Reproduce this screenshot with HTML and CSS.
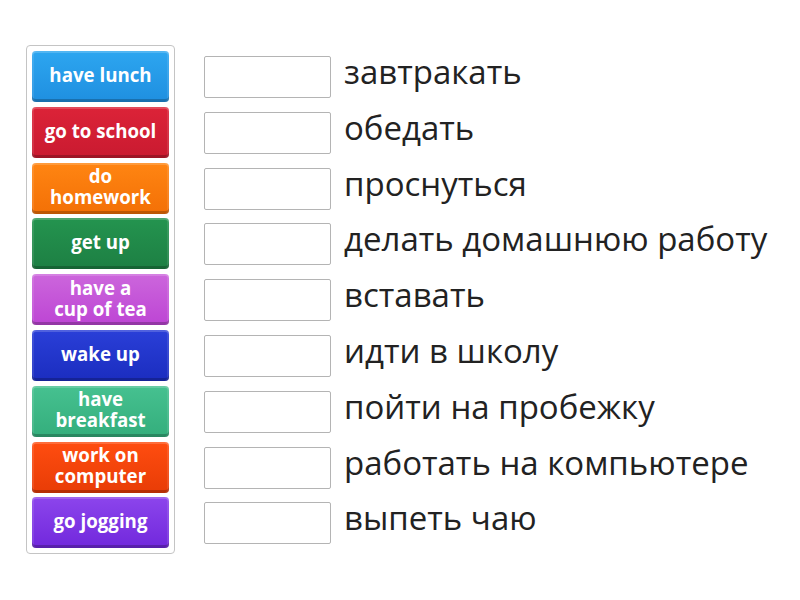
FILE: index.html
```html
<!DOCTYPE html>
<html>
<head>
<meta charset="utf-8">
<link rel="stylesheet" href="styles.css">
</head>
<body>
<div class="game">
  <div class="bank">
    <div class="tile c1">have lunch</div>
    <div class="tile c2">go to school</div>
    <div class="tile c3">do<br>homework</div>
    <div class="tile c4">get up</div>
    <div class="tile c5">have a<br>cup of tea</div>
    <div class="tile c6">wake up</div>
    <div class="tile c7">have<br>breakfast</div>
    <div class="tile c8">work on<br>computer</div>
    <div class="tile c9">go jogging</div>
  </div>
  <div class="rows">
    <div class="row"><div class="slot"></div><span class="word">завтракать</span></div>
    <div class="row"><div class="slot"></div><span class="word">обедать</span></div>
    <div class="row"><div class="slot"></div><span class="word">проснуться</span></div>
    <div class="row"><div class="slot"></div><span class="word">делать домашнюю работу</span></div>
    <div class="row"><div class="slot"></div><span class="word">вставать</span></div>
    <div class="row"><div class="slot"></div><span class="word">идти в школу</span></div>
    <div class="row"><div class="slot"></div><span class="word">пойти на пробежку</span></div>
    <div class="row"><div class="slot"></div><span class="word">работать на компьютере</span></div>
    <div class="row"><div class="slot"></div><span class="word">выпеть чаю</span></div>
  </div>
</div>
</body>
</html>
```
FILE: styles.css
```css
html, body {
  margin: 0;
  padding: 0;
  background: #fff;
}
body {
  font-family: "Open Sans", "Liberation Sans", sans-serif;
}
.game {
  display: flex;
  align-items: flex-start;
  padding: 45px 0 0 26px;
}
.bank {
  width: 137px;
  padding: 5px;
  border: 1px solid #c4c4c4;
  border-radius: 4px;
  display: flex;
  flex-direction: column;
  gap: 4.8px;
}
.tile {
  height: 51px;
  box-sizing: border-box;
  border-radius: 4px;
  color: #fff;
  font-weight: 700;
  font-size: 18.7px;
  line-height: 21px;
  text-align: center;
  display: flex;
  align-items: center;
  justify-content: center;
  padding-bottom: 4px;
  box-shadow: inset 0 -3px 0 rgba(0,0,0,0.22), inset 0 2px 0 rgba(255,255,255,0.18), inset 2px 0 0 rgba(255,255,255,0.1), inset -2px 0 0 rgba(255,255,255,0.1);
}
.c1 { background: linear-gradient(#2da6f0, #1f8fe0); }
.c2 { background: linear-gradient(#dc2338, #c91a30); }
.c3 { background: linear-gradient(#ff8512, #f37006); }
.c4 { background: linear-gradient(#24944f, #1d7f43); }
.c5 { background: linear-gradient(#cc66dc, #bd45d4); }
.c6 { background: linear-gradient(#2a3fd8, #1b2dbf); }
.c7 { background: linear-gradient(#46c190, #34ae7c); }
.c8 { background: linear-gradient(#ff4d10, #e83c06); }
.c9 { background: linear-gradient(#8c45ec, #7128dc); }
.rows {
  margin-left: 29px;
  padding-top: 11px;
  display: flex;
  flex-direction: column;
  gap: 13.8px;
}
.row {
  display: flex;
  align-items: center;
  height: 42px;
}
.slot {
  width: 127px;
  height: 42px;
  box-sizing: border-box;
  border: 1px solid #b4b4b4;
  border-radius: 2px;
  background: #fff;
  flex: none;
}
.word {
  margin-left: 13px;
  font-size: 33px;
  line-height: 42px;
  color: #222;
  white-space: nowrap;
  position: relative;
  top: -5px;
}
```
